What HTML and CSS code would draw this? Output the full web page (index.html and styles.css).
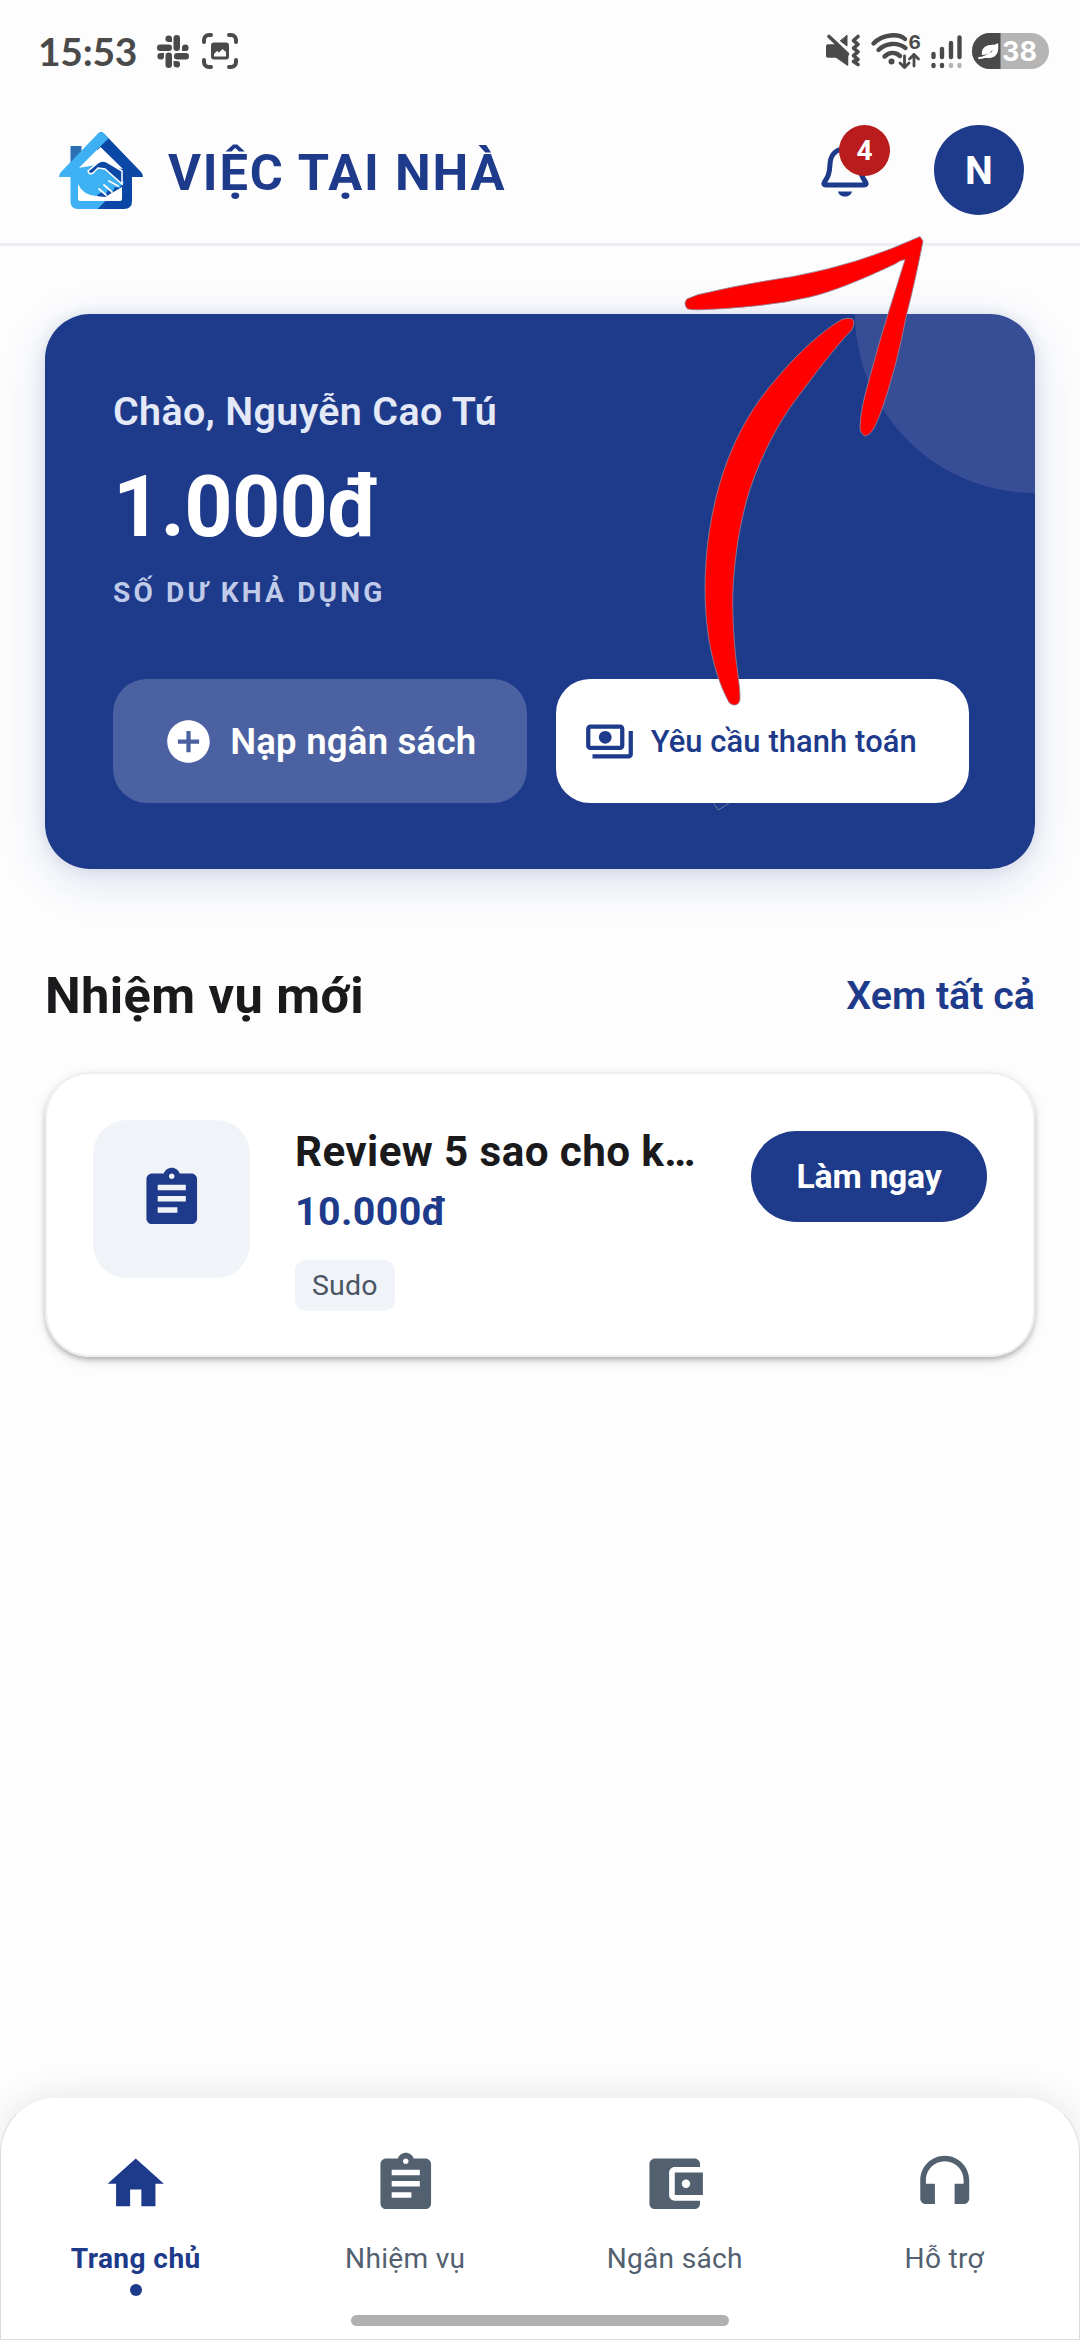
FILE: index.html
```html
<!DOCTYPE html>
<html lang="vi">
<head>
<meta charset="utf-8">
<title>Việc Tại Nhà</title>
<link rel="stylesheet" href="styles.css">
</head>
<body>
<div class="screen">
  <div class="status">
    <span class="clock">15:53</span>
    <svg class="slack" width="32" height="33" viewBox="0 0 32 33" fill="#4a4a4a">
      <rect x="0" y="9.500" width="15" height="6.500" rx="3.200"/><rect x="16.500" y="0" width="6.500" height="16" rx="3.200"/>
      <rect x="17" y="18" width="15" height="6.500" rx="3.200"/><rect x="8.500" y="17.500" width="6.500" height="15.500" rx="3.200"/>
      <path d="M15 7h-3.200A3.300 3.300 0 1 1 15 3.700zM25 16v-3.200A3.300 3.300 0 1 1 28.300 16zM16.500 26h3.200a3.300 3.300 0 1 1-3.200 3.300zM7 18v3.200A3.300 3.300 0 1 1 3.700 18z"/>
    </svg>
    <svg class="capture" width="36" height="36" viewBox="0 0 36 36" fill="none" stroke="#4a4a4a" stroke-width="4" stroke-linecap="round">
      <path d="M2 9V7a5 5 0 0 1 5-5h2M27 2h2a5 5 0 0 1 5 5v2M34 27v2a5 5 0 0 1-5 5h-2M9 34H7a5 5 0 0 1-5-5v-2"/>
      <path d="M12 9.500h12a3 3 0 0 1 3 3v11a3 3 0 0 1-3 3H12a3 3 0 0 1-3-3v-11a3 3 0 0 1 3-3zM12 23.500h12v-4.500l-3.500-3-3.500 3.500-2-1.500-3 3z" fill="#4a4a4a" fill-rule="evenodd" stroke="none"/>
    </svg>
    <svg class="tray" width="236" height="40" viewBox="0 0 236 40" fill="none" stroke="#4a4a4a" stroke-width="3.600" stroke-linecap="round" stroke-linejoin="round">
      <g transform="translate(-2.500 1)">
        <path d="M5 13h8.500l10.500 9.500V33L12.500 25H5a2 2 0 0 1-2-2v-8a2 2 0 0 1 2-2z" fill="#4a4a4a" stroke-width="1.500"/>
        <path d="M5.500 4.500 24 22"/><path d="M23.500 3.500v10.500L17 9z" fill="#4a4a4a" stroke-width="1"/>
        <path d="M34.500 4.500l-4.500 4 4.500 3.800-4.500 3.800 4.500 3.800-4.500 3.800 4.500 3.800-4.500 2 4.500 3"/>
      </g>
      <path d="M47.500 12.500C57 2.500 73 2.500 79 8M52.500 19C60 11.500 71.500 11 79.500 17M58.500 25.500c5-4.500 11-4.500 15.500-.500" stroke-width="4.400"/>
      <circle cx="65.500" cy="30.500" r="3" fill="#4a4a4a" stroke="none"/>
      <path d="M78.500 25v11.500M74 32l4.500 4.500L83 32M88 35V23.500M83.500 28l4.500-4.500 4.500 4.500" stroke-width="2.800"/>
      <g stroke-width="4.400"><path d="M107.500 23v3M116 18v8M125 12v14M133.500 6.500V26M107.500 34v1M116 34v1"/><path d="M125 34v1M133.500 34v1" stroke="#b5b5b5"/></g>
      <rect x="146" y="2" width="77" height="36" rx="18" fill="#b5b5b5" stroke="none"/>
      <path d="M174.500 2H164a18 18 0 0 0 0 36h10.500z" fill="#4a4a4a" stroke="none"/>
      <path d="M172 12c1 7 0 13-6 14.500-4 1-7 .500-9-.500 5-1 8-4 10-7-4 3-7 5-11 5-1-6 3-9.500 8-10 3-.300 6 0 8-2z" fill="#fff" stroke="none"/>
      <path d="M153 27c4 0 8-2 11-5" stroke="#fff" stroke-width="1.800"/>
      <text class="wifi-gen" x="82.500" y="17.500">6</text>
      <text class="level" x="176" y="30">38</text>
    </svg>
  </div>

  <header class="header">
    <svg class="logo" width="84" height="77" viewBox="0 0 84 77">
      <path d="M11.500 14h11v10l-11 9z" fill="#2c6fb4"/>
      <path d="M39 1.500q3-3 6 0L82 40q2 2 2 5H73v24q0 8-8 8H38V20z" fill="#0b48a6"/>
      <path d="M39 1.500q3-3 6 0l4.500 4.700L19 37v31h28.500L38.500 77H19q-7.500 0-7.500-8V45H0q0-3 2-5z" fill="#3eb1f5"/>
      <path d="M41.500 15 64 37q-10-1-21-8-9 4-22 6z" fill="#fff"/>
      <path d="M19 53q6 9 18 11l9 1 17-10v12q0 2-2 2H21q-2 0-2-2z" fill="#fff"/>
      <path d="M19 36q14-2 21-4l10 3 14 14q2 3-2 4l-1 3-5-1-2 4-5-1-2 4-4-2-6 4q-13-1-18-12z" fill="#3eb1f5"/>
      <path d="M29 39l11-9q4-2 8 0l15 9v13L46 37l-7-1-5 5q-4 2-5-2z" fill="#0b48a6" stroke="#fff" stroke-width="1.500"/>
      <path d="M50 49l9 5M45 53l8 7M40 57l7 6" stroke="#fff" stroke-width="1.800" stroke-linecap="round"/>
    </svg>
    <h1 class="brand">VIỆC TẠI NHÀ</h1>
    <div class="bell">
      <svg width="48" height="52" viewBox="0 0 48 52">
        <path d="M24 3C14 3 9.500 10 9 18 8.500 28 7 31 3.500 36c-1.200 1.900-.500 3 1.500 3h38c2 0 2.700-1.100 1.500-3C41 31 39.500 28 39 18 38.500 10 34 3 24 3z" fill="none" stroke="#1e3a8a" stroke-width="5"/>
        <path d="M17 45.500h14c-.500 3-3.500 5-7 5s-6.500-2-7-5z" fill="#1e3a8a"/>
      </svg>
      <span class="badge">4</span>
    </div>
    <div class="avatar">N</div>
  </header>

  <main class="content">
    <section class="balance">
      <p class="greeting">Chào, Nguyễn Cao Tú</p>
      <p class="amount">1.000đ</p>
      <p class="caption">SỐ DƯ KHẢ DỤNG</p>
      <div class="actions">
        <button class="action action-soft">
          <svg width="51" height="51" viewBox="0 0 24 24" fill="#fff"><path d="M12 2C6.480 2 2 6.480 2 12s4.480 10 10 10 10-4.480 10-10S17.520 2 12 2zm5 11h-4v4h-2v-4H7v-2h4V7h2v4h4v2z"/></svg>
          <span>Nạp ngân sách</span>
        </button>
        <button class="action action-solid">
          <svg width="51" height="51" viewBox="0 0 24 24" fill="#1e3a8a"><path d="M19 14V6c0-1.100-.900-2-2-2H3c-1.100 0-2 .900-2 2v8c0 1.100.900 2 2 2h14c1.100 0 2-.900 2-2zm-2 0H3V6h14v8zm-7-7c-1.660 0-3 1.340-3 3s1.340 3 3 3 3-1.340 3-3-1.340-3-3-3zm13 0v11c0 1.100-.900 2-2 2H4v-2h17V7h2z"/></svg>
          <span>Yêu cầu thanh toán</span>
        </button>
      </div>
    </section>

    <div class="section-head">
      <h2>Nhiệm vụ mới</h2>
      <a class="see-all">Xem tất cả</a>
    </div>

    <article class="task">
      <div class="task-icon">
        <svg width="67.500" height="67.500" viewBox="0 0 24 24" fill="#1e3a8a"><path d="M19 3h-4.180C14.400 1.840 13.300 1 12 1c-1.300 0-2.400.840-2.820 2H5c-1.100 0-2 .900-2 2v14c0 1.100.900 2 2 2h14c1.100 0 2-.900 2-2V5c0-1.100-.900-2-2-2zm-7 0c.550 0 1 .450 1 1s-.450 1-1 1-1-.450-1-1 .450-1 1-1zm2 14H7v-2h7v2zm3-4H7v-2h10v2zm0-4H7V7h10v2z"/></svg>
      </div>
      <div class="task-info">
        <h3>Review 5 sao cho k…</h3>
        <p class="price">10.000đ</p>
        <span class="tag">Sudo</span>
      </div>
      <button class="go">Làm ngay</button>
    </article>
  </main>

  <nav class="nav">
    <a class="tab tab-active">
      <svg width="67.500" height="67.500" viewBox="0 0 24 24"><path d="M10 20v-6h4v6h5v-8h3L12 3 2 12h3v8z"/></svg>
      <span>Trang chủ</span><i class="dot"></i>
    </a>
    <a class="tab">
      <svg width="67.500" height="67.500" viewBox="0 0 24 24"><path d="M19 3h-4.180C14.400 1.840 13.300 1 12 1c-1.300 0-2.400.840-2.820 2H5c-1.100 0-2 .900-2 2v14c0 1.100.900 2 2 2h14c1.100 0 2-.900 2-2V5c0-1.100-.900-2-2-2zm-7 0c.550 0 1 .450 1 1s-.450 1-1 1-1-.450-1-1 .450-1 1-1zm2 14H7v-2h7v2zm3-4H7v-2h10v2zm0-4H7V7h10v2z"/></svg>
      <span>Nhiệm vụ</span>
    </a>
    <a class="tab">
      <svg width="67.500" height="67.500" viewBox="0 0 24 24"><path d="M21 18v1c0 1.100-.900 2-2 2H5c-1.110 0-2-.900-2-2V5c0-1.100.890-2 2-2h14c1.100 0 2 .900 2 2v1h-9c-1.110 0-2 .900-2 2v8c0 1.100.890 2 2 2h9zm-9-2h10V8H12v8zm4-2.500c-.830 0-1.500-.670-1.500-1.500s.670-1.500 1.500-1.500 1.500.670 1.500 1.500-.670 1.500-1.500 1.500z"/></svg>
      <span>Ngân sách</span>
    </a>
    <a class="tab">
      <svg width="67.500" height="67.500" viewBox="0 0 24 24"><path d="M12 2c-4.800 0-8.700 3.900-8.700 8.700V17.200c0 1.100.900 2 2 2h3.200v-7.200H5.300v-1.300C5.300 7 8.300 4 12 4s6.700 3 6.700 6.700V12h-3.200v7.200h3.200c1.100 0 2-.900 2-2v-6.500C20.700 5.900 16.800 2 12 2z"/></svg>
      <span>Hỗ trợ</span>
    </a>
    <div class="home-bar"></div>
  </nav>

  <svg class="arrow" width="400" height="600" viewBox="660 220 400 600" fill="#fe0000" stroke="#8a86a0" stroke-width=".8">
    <path d="M687 299Q697 294 710 292C740 285 765 281 793 276.500Q860 264 920 236.600L923 241C918 267 913 290 906.700 314Q896 370 881 411.800 876 425 873 429.600 870 435 864.700 436 860 433 860 427.600 860 410 870.700 374 878 346 888 314L905 259.500Q900 260 895 264 840 290 810 297 785 303 760 305.400 725 309 700 309.800 689 310 687 308.600 683 303 687 299z"/>
    <path d="M841.700 319.600Q847 317.500 852 318.500 856 322 851.700 330C835 347 815 374 797 398 778 423 762 454 750 489 741 517 735 552 733 588 732 612 734 648 738 675 739 683 740 690 740 698 740 703 737 705 735 705 731 705 729 703 728 700.400 724 693 721 686 718 676.700 709 650 705 620 705 588 705 550 711 510 723 473 736 434 754 404 777 378 798 353 822 331 841.700 319.600z"/>
    <path d="M713.500 803l5 7 10.500-7" fill="none" stroke="#7f87a8"/>
  </svg>
</div>
</body>
</html>
```
FILE: styles.css
```css
* { box-sizing: border-box; }
body, h1, h2, h3, p { margin: 0; }
body { font-family: Roboto, "Noto Sans", sans-serif; background: #fdfdfe; }
button { font: inherit; border: 0; padding: 0; }
svg { display: block; flex: none; }

.screen {
  position: relative;
  width: 1080px;
  height: 2340px;
  display: flex;
  flex-direction: column;
  overflow: hidden;
  background: #fdfdfe;
}

.status {
  height: 97px;
  padding: 5px 18px 0 38px;
  display: flex;
  align-items: center;
  color: #4a4a4a;
}
.clock { width: 119px; font: 700 39px/46px Lato, sans-serif; letter-spacing: -.3px; white-space: nowrap; }
.capture { margin-left: 13px; }
.tray { margin-left: auto; }
.wifi-gen { font: 700 19px Inter, sans-serif; fill: #4a4a4a; stroke: none; }
.level { font: 700 27px Inter, sans-serif; fill: #fff; stroke: none; }

.header {
  height: 149px;
  padding: 0 56px 0 59px;
  display: flex;
  align-items: center;
  border-bottom: 3px solid #ececf3;
}
.brand {
  margin: 5px 0 0 25px;
  font-size: 50.600px;
  font-weight: 700;
  line-height: 60px;
  letter-spacing: 1.800px;
  color: #1e3a8a;
  white-space: nowrap;
}
.bell { position: relative; margin: 3px 65px 0 auto; }
.badge {
  position: absolute;
  left: 18px;
  top: -21px;
  width: 51px;
  height: 51px;
  border-radius: 50%;
  background: #b91c1c;
  color: #fff;
  font-size: 28px;
  font-weight: 700;
  line-height: 51px;
  text-align: center;
}
.avatar {
  width: 90px;
  height: 90px;
  border-radius: 50%;
  background: #1e3a8a;
  color: #fff;
  font-size: 39.400px;
  font-weight: 700;
  line-height: 92px;
  text-align: center;
}

.content { padding: 68px 45px 0; }

.balance {
  height: 555px;
  padding: 67px 66px 0 68px;
  border-radius: 45px;
  background: radial-gradient(circle at 990px -1px, #374e96 179.500px, #1e3a8a 180.500px);
  box-shadow: 0 12px 45px rgba(30, 58, 138, .15), 0 0 14px rgba(30, 58, 138, .12);
  color: #fff;
}
.greeting { font-size: 39.400px; font-weight: 600; line-height: 61px; letter-spacing: .350px; color: #e4e9f8; }
.amount { margin-top: 10px; font-size: 84.400px; font-weight: 700; line-height: 112px; letter-spacing: -.800px; }
.caption { margin-top: 8px; font-size: 28.100px; font-weight: 700; line-height: 42px; letter-spacing: 3.150px; color: #c0cbea; }
.actions { margin-top: 65px; display: grid; grid-template-columns: 1fr 1fr; gap: 29px; }
.action {
  height: 124px;
  border-radius: 34px;
  display: flex;
  align-items: center;
  justify-content: center;
  gap: 16px;
  white-space: nowrap;
}
.action-soft { background: #4b61a1; color: #fff; font-size: 36.600px; font-weight: 600; letter-spacing: .2px; }
.action-solid { padding-right: 24px; background: #fff; color: #1e3a8a; font-size: 30.900px; font-weight: 500; letter-spacing: .1px; }

.section-head { margin-top: 97px; display: flex; justify-content: space-between; align-items: center; line-height: 60px; }
.section-head h2 { font-size: 50.600px; font-weight: 700; letter-spacing: .4px; color: #1a1a1c; }
.see-all { font-size: 39.400px; font-weight: 600; color: #1e3a8a; }

.task {
  margin-top: 46px;
  height: 285px;
  padding: 48px;
  display: flex;
  align-items: flex-start;
  border-radius: 45px;
  background: #fff;
  box-shadow: inset 0 0 0 2px #efeff0, 0 3px 4px rgba(0, 0, 0, .2), 0 4px 12px rgba(0, 0, 0, .12);
}
.task-icon {
  width: 157px;
  height: 158px;
  border-radius: 34px;
  background: #f0f4f9;
  display: flex;
  align-items: center;
  justify-content: center;
}
.task-info { margin: 4px 0 0 45px; }
.task-info h3 { font-size: 42.200px; font-weight: 700; line-height: 56px; letter-spacing: .4px; color: #1a1a1c; white-space: nowrap; }
.price { margin-top: 5px; font-size: 39.400px; font-weight: 700; line-height: 54px; letter-spacing: .4px; color: #1e3a8a; }
.tag {
  display: inline-block;
  margin-top: 21px;
  padding: 0 17px;
  border-radius: 11px;
  background: #f0f4f9;
  color: #4b5563;
  font-size: 28.500px;
  letter-spacing: .2px;
  line-height: 51px;
}
.go {
  width: 236px;
  height: 91px;
  margin: 11px 0 0 auto;
  border-radius: 46px;
  background: #1e3a8a;
  color: #fff;
  font-size: 33.800px;
  font-weight: 700;
  letter-spacing: -.3px;
}

.nav {
  position: relative;
  height: 243px;
  margin-top: auto;
  padding-top: 52px;
  display: grid;
  grid-template-columns: repeat(4, 1fr);
  grid-template-rows: 165px 11px;
  border: 1px solid #dcdcdc;
  border-top-color: #f0f0f0;
  border-radius: 56px 56px 0 0;
  background: #fff;
  box-shadow: 0 -6px 30px rgba(0, 0, 0, .07);
}
.tab { display: flex; flex-direction: column; align-items: center; color: #526070; fill: #526070; font-size: 28.100px; line-height: 40px; letter-spacing: .3px; }
.tab span { margin-top: 21px; }
.tab-active { color: #1e3a8a; fill: #1e3a8a; font-weight: 700; letter-spacing: .4px; }
.dot { width: 12px; height: 12px; margin-top: 5px; border-radius: 50%; background: #1e3a8a; }
.home-bar { grid-column: 1 / -1; justify-self: center; width: 378px; height: 11px; border-radius: 6px; background: #b0b0b0; }

.arrow { position: absolute; left: 660px; top: 220px; }
```
